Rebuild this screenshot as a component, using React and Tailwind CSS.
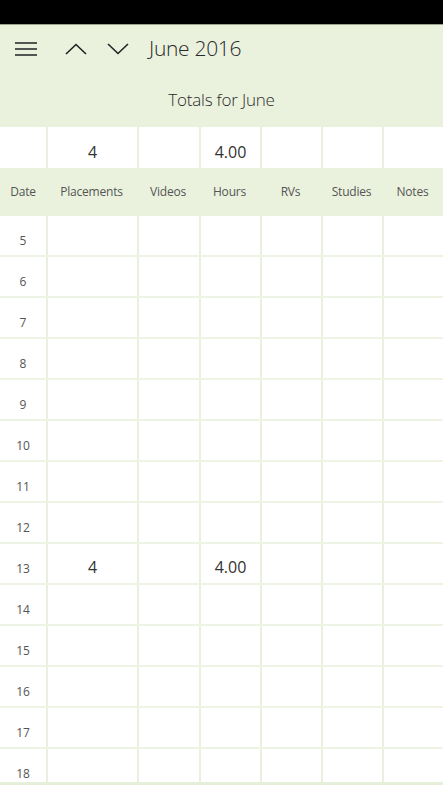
const cols = ['Date', 'Placements', 'Videos', 'Hours', 'RVs', 'Studies', 'Notes'];
const grid = 'grid grid-cols-[46px_91px_62px_61px_61px_61px_61px]';
const days = [5, 6, 7, 8, 9, 10, 11, 12, 13, 14, 15, 16, 17, 18];
const data = { 13: { 1: '4', 3: '4.00' } };

function Row({ date, values, top }) {
  return (
    <div className={`${grid} h-[41px] ${top ? '' : 'border-b-2 border-[#edf4e3]'}`}>
      {cols.map((c, i) => (
        <div
          key={c}
          className={`flex items-end justify-center ${i > 0 ? 'border-l-2 border-[#e9f1de]' : ''} ${i === 0 ? 'pb-[5px] text-[12px] text-[#555]' : 'pb-[4px] text-[16px] text-[#333]'}`}
        >
          {i === 0 ? date : values?.[i] ?? ''}
        </div>
      ))}
    </div>
  );
}

export default function App() {
  return (
    <div className="h-[788px] w-[443px] flex flex-col overflow-hidden bg-white" style={{ fontFamily: '"Open Sans", "Noto Sans", sans-serif' }}>
      <div className="h-[25px] bg-black border-b border-[#9aa58c]" />

      {/* header */}
      <div className="h-[102px] bg-[#eaf2de] flex flex-col">
        <div className="h-[48px] flex items-center">
          <svg className="ml-[15px]" width="22" height="14" viewBox="0 0 22 14">
            <path d="M0 1h22M0 7h22M0 13h22" stroke="#222" strokeWidth="1.6" />
          </svg>
          <svg className="ml-[28px]" width="22" height="12" viewBox="0 0 22 12">
            <path d="M1 11L11 1.5L21 11" fill="none" stroke="#222" strokeWidth="1.6" />
          </svg>
          <svg className="ml-[20px]" width="22" height="12" viewBox="0 0 22 12">
            <path d="M1 1L11 10.5L21 1" fill="none" stroke="#222" strokeWidth="1.6" />
          </svg>
          <span className="ml-[20px] text-[21px] font-light text-[#2a2a2a] tracking-[-0.3px]">June 2016</span>
        </div>
        <div className="flex-1 flex items-center justify-center text-[17px] font-light text-[#2a2a2a] tracking-[-0.2px]">
          Totals for June
        </div>
      </div>

      {/* totals row */}
      <Row date="" values={{ 1: '4', 3: '4.00' }} top />

      {/* column headers */}
      <div className={`${grid} h-[48px] bg-[#eaf2de]`}>
        {cols.map((c) => (
          <div key={c} className="flex items-center justify-center text-[12px] text-[#555] tracking-[-0.2px]">
            {c}
          </div>
        ))}
      </div>

      {/* days */}
      <div className="flex-1 overflow-hidden">
        {days.map((d) => (
          <Row key={d} date={d} values={data[d]} />
        ))}
      </div>
      <div className="h-[3px] bg-[#e6efd9]" />
      <div className="h-[3px] bg-white" />
    </div>
  );
}
